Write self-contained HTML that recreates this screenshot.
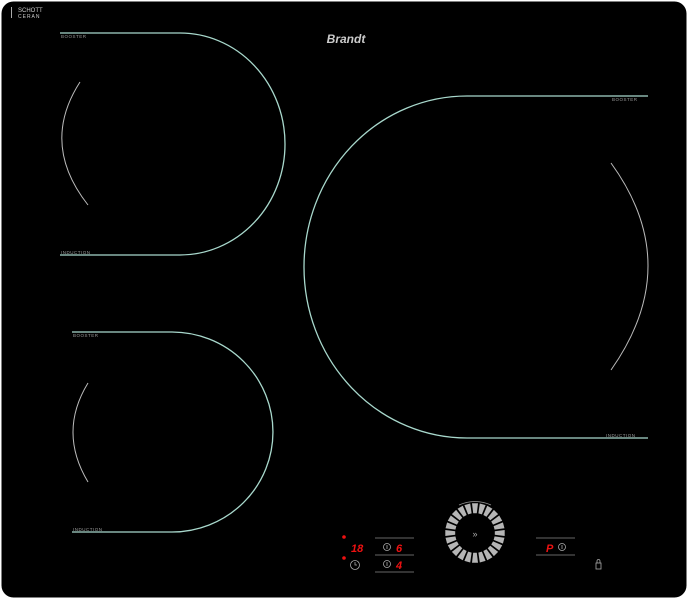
<!DOCTYPE html>
<html><head><meta charset="utf-8"><style>
html,body{margin:0;padding:0;background:#fff;}
svg{display:block}
text{font-family:"Liberation Sans",sans-serif}
</style></head><body>
<svg width="689" height="600" viewBox="0 0 689 600">
<rect x="1.5" y="1.5" width="685" height="596" rx="12" fill="#000"/>
<g fill="none" stroke="#a8d8cc" stroke-width="1.3">
<path d="M60 33 H180 A105 111 0 0 1 180 255 H60"/>
<path d="M467 96 H648 M467 96 A163 171 0 0 0 467 438 H648"/>
<path d="M72 332 H172 A101 100 0 0 1 172 532 H72"/>
</g>
<g fill="none" stroke="#bbb" stroke-width="1">
<path d="M80 82 Q40 144 88 205"/>
<path d="M611 163 Q685 265 611 370"/>
<path d="M88 383 Q58 432 88 482"/>
</g>
<g fill="#999" font-size="4.5" letter-spacing="0.5">
<text x="61" y="38">BOOSTER</text>
<text x="61" y="254">INDUCTION</text>
<text x="612" y="101">BOOSTER</text>
<text x="606" y="437">INDUCTION</text>
<text x="73" y="337">BOOSTER</text>
<text x="73" y="531">INDUCTION</text>
</g>
<text x="18" y="12" font-size="6" fill="#ccc">SCHOTT</text>
<text x="18" y="18" font-size="5" fill="#ccc" letter-spacing="1">CERAN</text>
<rect x="11" y="7" width="1" height="11" fill="#aaa"/>
<text x="346" y="43" font-size="12" font-weight="bold" font-style="italic" fill="#ccc" text-anchor="middle">Brandt</text>
<path d="M459 505 Q475 498 491 505" stroke="#999" fill="none" stroke-width="0.8"/>
<text x="475" y="537" font-size="9" fill="#aaa" text-anchor="middle">»</text>
<g stroke="#888" stroke-width="0.8">
<path d="M375 538 H414 M375 555 H414 M375 572 H414 M536 538 H575 M536 555 H575"/>
</g>
<g fill="none" stroke="#aaa" stroke-width="0.8">
<circle cx="387" cy="547" r="3.5"/><circle cx="387" cy="564" r="3.5"/><circle cx="562" cy="547" r="3.5"/>
<circle cx="355" cy="565" r="4.5"/>
<path d="M387 545 V549 M387 562 V566 M562 545 V549 M355 562 V565 H357"/>
<rect x="596" y="563" width="5" height="6"/><path d="M597 563 V561 A1.5 1.5 0 0 1 600 561 V563"/>
</g>
<g fill="#e11" font-size="11" font-style="italic" font-weight="bold">
<text x="351" y="552">18</text>
<text x="396" y="552">6</text>
<text x="396" y="569">4</text>
<text x="546" y="552">P</text>
</g>
<circle cx="344" cy="537" r="1.8" fill="#e11"/>
<circle cx="344" cy="558" r="1.8" fill="#e11"/>
<g transform="translate(475,533)" fill="#b5b5b5">
<path id="s" d="M-3 -29.7 L3 -29.7 L1.8 -19.8 L-1.8 -19.8 Z"/>
<use href="#s" transform="rotate(15)"/><use href="#s" transform="rotate(30)"/><use href="#s" transform="rotate(45)"/>
<use href="#s" transform="rotate(60)"/><use href="#s" transform="rotate(75)"/><use href="#s" transform="rotate(90)"/>
<use href="#s" transform="rotate(105)"/><use href="#s" transform="rotate(120)"/><use href="#s" transform="rotate(135)"/>
<use href="#s" transform="rotate(150)"/><use href="#s" transform="rotate(165)"/><use href="#s" transform="rotate(180)"/>
<use href="#s" transform="rotate(195)"/><use href="#s" transform="rotate(210)"/><use href="#s" transform="rotate(225)"/>
<use href="#s" transform="rotate(240)"/><use href="#s" transform="rotate(255)"/><use href="#s" transform="rotate(270)"/>
<use href="#s" transform="rotate(285)"/><use href="#s" transform="rotate(300)"/><use href="#s" transform="rotate(315)"/>
<use href="#s" transform="rotate(330)"/><use href="#s" transform="rotate(345)"/>
</g>
</svg>
</body></html>
